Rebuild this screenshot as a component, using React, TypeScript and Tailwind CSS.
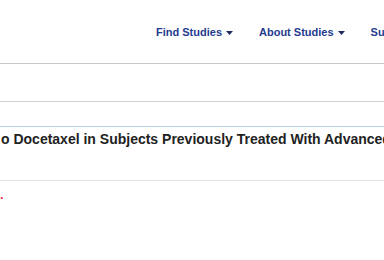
import React from 'react';

const navItems = ['Find Studies', 'About Studies', 'Submit Studies'];

function Caret() {
  return (
    <svg width="7" height="4" viewBox="0 0 7 4" className="ml-[4px] inline-block">
      <path d="M0 0 L7 0 L3.5 4 Z" fill="#1f2d5c" />
    </svg>
  );
}

export default function App() {
  return (
    <div
      className="w-[384px] h-[260px] overflow-hidden bg-white"
      style={{ fontFamily: '"Liberation Sans", Arial, sans-serif' }}
    >
      {/* Top nav */}
      <header className="h-[64px] flex items-center pt-[2px] border-b border-[#c8c8c8]">
        <nav className="flex items-center gap-[26px] pl-[156px] whitespace-nowrap">
          {navItems.map((label) => (
            <span key={label} className="flex items-center text-[11px] font-bold text-[#243b8f]">
              {label}
              <Caret />
            </span>
          ))}
        </nav>
      </header>

      {/* Breadcrumb row */}
      <div className="h-[38px] border-b border-[#d2d2d2]" />

      {/* Title */}
      <div className="mt-[24px] h-[55px] border-t border-[#b9cfe6] border-b border-b-[#e2e2e2] overflow-hidden">
        <h1 className="pt-[2px] pl-[1px] text-[14px] font-bold text-[#222] whitespace-nowrap">
          o Docetaxel in Subjects Previously Treated With Advanced Non-Small Cell Lung Cancer
        </h1>
      </div>

      <p className="mt-[7px] text-[13px] font-bold text-[#e8304f] leading-none">.</p>
    </div>
  );
}
